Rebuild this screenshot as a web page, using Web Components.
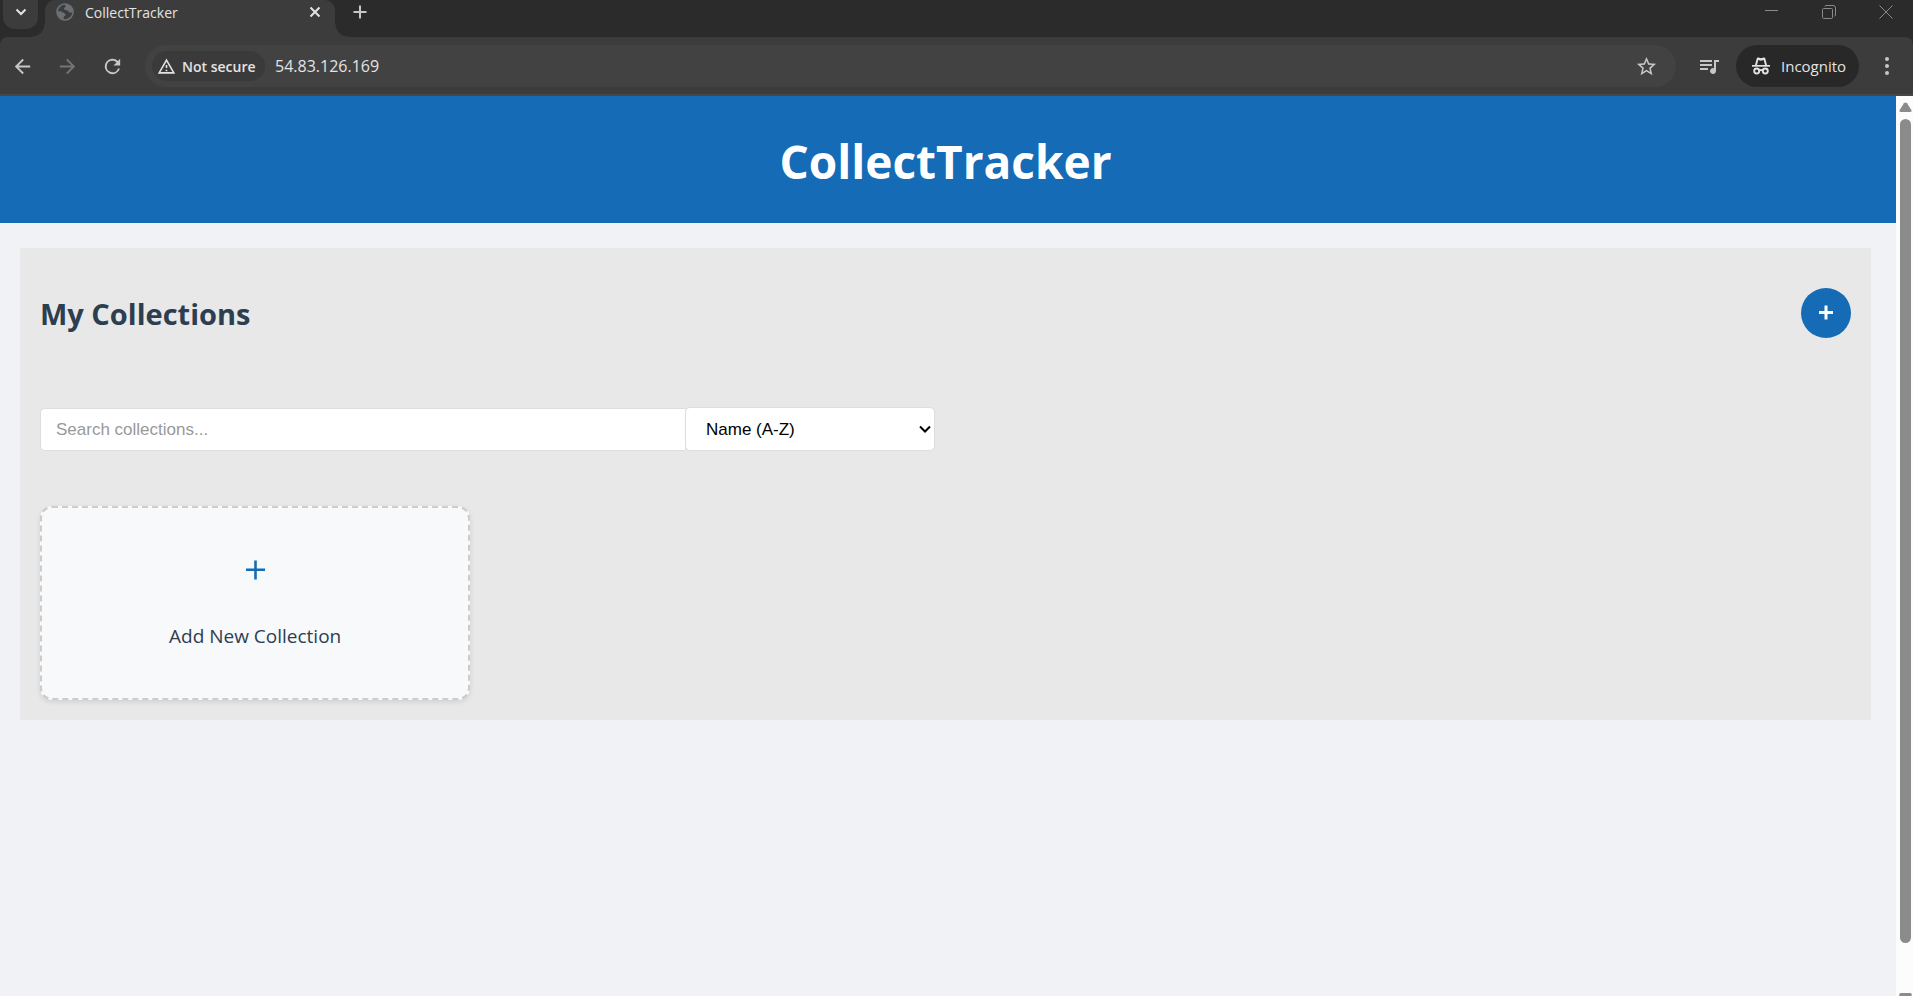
<!DOCTYPE html>
<html lang="en">
<head>
<meta charset="utf-8">
<title>CollectTracker</title>
<style>
  body { margin: 0; font-family: "Open Sans", "Noto Sans", sans-serif; background: #f0f2f5; }
</style>
</head>
<body>
<browser-window>
  <tab-strip slot="tabs">CollectTracker</tab-strip>
  <tool-bar slot="toolbar" address="54.83.126.169"></tool-bar>
  <site-header>CollectTracker</site-header>
  <collections-panel>
    <span slot="title">My Collections</span>
    <search-bar slot="search"></search-bar>
    <add-card>Add New Collection</add-card>
  </collections-panel>
  <scroll-bar slot="scroll"></scroll-bar>
</browser-window>

<script>
function define(name, html) {
  const template = document.createElement('template');
  template.innerHTML = html;
  customElements.define(name, class extends HTMLElement {
    constructor() {
      super();
      this.attachShadow({ mode: 'open' }).append(template.content.cloneNode(true));
    }
    connectedCallback() {
      const url = this.shadowRoot.querySelector('[data-address]');
      if (url) url.value = this.getAttribute('address') || '';
    }
  });
}

define('browser-window', `
<style>
  :host { display: flex; flex-direction: column; height: 100vh; overflow: hidden; background: #2b2b2b; }
  .view { flex: 1; min-height: 0; display: flex; }
  .page { flex: 1; min-width: 0; overflow: hidden; background: #f0f2f5; }
</style>
<slot name="tabs"></slot>
<slot name="toolbar"></slot>
<div class="view"><main class="page"><slot></slot></main><slot name="scroll"></slot></div>`);

define('tab-strip', `
<style>
  :host { display: flex; height: 37px; background: #2b2b2b; color: #e3e3e3; font-size: 14px; }
  button { border: 0; padding: 0; margin: 0; background: none; color: inherit; display: grid; place-items: center; }
  svg { display: block; }
  .search { width: 35px; height: 29px; margin: 0 7px 0 3px; padding-bottom: 5px; box-sizing: border-box; background: #3c3c3c; border-radius: 0 0 12px 12px; }
  .tab { position: relative; display: flex; align-items: center; gap: 10px; box-sizing: border-box; width: 290px; height: 37px; padding: 0 14px 13px 10px; background: #3c3c3c; border-radius: 10px 10px 0 0; }
  .tab::before, .tab::after { content: ""; position: absolute; bottom: 0; width: 13px; height: 13px; }
  .tab::before { right: 100%; background: radial-gradient(circle at 0 0, transparent 12px, #3c3c3c 13px); }
  .tab::after { left: 100%; background: radial-gradient(circle at 100% 0, transparent 12px, #3c3c3c 13px); }
  .name { flex: 1; }
  .new { width: 50px; height: 24px; }
  .controls { margin-left: auto; display: flex; gap: 3px; color: #8a8a8a; }
  .controls button { width: 54px; height: 24px; }
</style>
<button class="search" aria-label="Search tabs"><svg width="12" height="8" viewBox="0 0 12 8" fill="none" stroke="currentColor" stroke-width="2"><path d="M1.5 1.5 6 6l4.500-4.500"/></svg></button>
<div class="tab">
  <svg width="20" height="20" viewBox="0 0 20 20"><circle cx="10" cy="10" r="8" fill="none" stroke="#6b7075" stroke-width="1.600"/><path fill="#6b7075" d="M2 9.500c3-.5 4.500-.2 6 1 1.300.8 2.800 1 2.500 2.500-.3 1.200-1.500 1-1.800 2.200l-.2 2.800C5 17.500 2 14 2 9.500zM10 2c4 0 7.500 3 8 7-.8 1.500-2.200 2-3.500 1.500-1-.4-1-1.800-2.300-2-1.500-.2-3-.3-3.200-1.700-.1-1.200 1.500-1.300 1.500-2.300z"/></svg>
  <span class="name"><slot></slot></span>
  <button aria-label="Close tab"><svg width="12" height="12" viewBox="0 0 12 12" stroke="currentColor" stroke-width="2"><path d="m1.500 1.500 9 9m0-9-9 9"/></svg></button>
</div>
<button class="new" aria-label="New tab"><svg width="14" height="14" viewBox="0 0 14 14" stroke="#c7c7c7" stroke-width="2"><path d="M7 .5v13M.5 7h13"/></svg></button>
<div class="controls">
  <button aria-label="Minimize"><svg width="14" height="14" viewBox="0 0 14 14" stroke="currentColor"><path d="M0 5.500h13"/></svg></button>
  <button aria-label="Restore"><svg width="14" height="14" viewBox="0 0 14 14" fill="none" stroke="currentColor"><rect x=".5" y="3.500" width="10" height="10" rx="1"/><path d="M3 1.500q0-1 1-1h7q2.500 0 2.500 2.500v7q0 1-1 1"/></svg></button>
  <button aria-label="Close"><svg width="14" height="14" viewBox="0 0 14 14" stroke="currentColor"><path d="m.5.5 13 13m0-13-13 13"/></svg></button>
</div>`);

define('tool-bar', `
<style>
  :host { display: flex; align-items: center; box-sizing: border-box; height: 59px; padding: 1px 9px 0 10px; background: #3c3c3c; border-bottom: 2px solid #474747; border-radius: 8px 8px 0 0; color: #c7c7c7; }
  button { border: 0; padding: 0; margin: 0; background: none; color: inherit; font: inherit; display: grid; place-items: center; }
  svg { display: block; fill: currentColor; }
  .nav { width: 24px; height: 24px; margin-right: 21px; }
  .off { color: #757575; }
  .box { flex: 1; min-width: 0; display: flex; align-items: center; box-sizing: border-box; height: 42px; padding: 0 18px 0 7px; border-radius: 21px; background: #424242; color: #e3e3e3; }
  .chip { display: flex; align-items: center; gap: 6px; height: 30px; width: 113px; padding-left: 5px; box-sizing: border-box; border-radius: 15px; background: #3a3a3a; font-size: 14px; font-weight: 600; }
  input { flex: 1; min-width: 0; margin: 0 10px; padding: 0; border: 0; background: none; color: inherit; font: 16px "Open Sans", "Noto Sans", sans-serif; outline: 0; }
  .queue { margin: 0 15px 0 21px; }
  .who { display: flex; align-items: center; gap: 10px; width: 123px; height: 42px; padding-left: 15px; box-sizing: border-box; border-radius: 21px; background: #282828; color: #e3e3e3; font-size: 15px; }
  .more { width: 10px; margin: 0 12px 0 23px; }
</style>
<button class="nav" aria-label="Back"><svg width="23" height="23" viewBox="0 0 24 24"><path d="M20 11H7.830l5.590-5.590L12 4l-8 8 8 8 1.410-1.410L7.830 13H20z"/></svg></button>
<button class="nav off" aria-label="Forward"><svg width="23" height="23" viewBox="0 0 24 24"><path d="m12 4-1.410 1.410L16.170 11H4v2h12.170l-5.580 5.590L12 20l8-8z"/></svg></button>
<button class="nav" aria-label="Reload"><svg width="23" height="23" viewBox="0 0 24 24"><path d="M17.650 6.350A8 8 0 1 0 19.730 14h-2.080A6 6 0 1 1 12 6c1.660 0 3.140.69 4.220 1.780L13 11h7V4z"/></svg></button>
<div class="box">
  <button class="chip"><svg width="19" height="19" viewBox="0 0 24 24"><path d="M12 5.990 19.530 19H4.470L12 5.990M12 2 1 21h22L12 2zm1 14h-2v2h2v-2zm0-6h-2v4h2v-4z"/></svg>Not secure</button>
  <input data-address aria-label="Address" spellcheck="false">
  <button aria-label="Bookmark"><svg width="23" height="23" viewBox="0 0 24 24" style="color:#c7c7c7"><path d="m22 9.240-7.190-.62L12 2 9.190 8.630 2 9.240l5.460 4.730L5.820 21 12 17.270 18.180 21l-1.630-7.030L22 9.240zM12 15.400l-3.760 2.270 1-4.280-3.320-2.880 4.380-.38L12 6.100l1.710 4.040 4.380.38-3.320 2.880 1 4.280L12 15.400z"/></svg></button>
</div>
<button class="queue" aria-label="Media controls"><svg width="24" height="24" viewBox="0 0 24 24"><path d="M15 6H3v2h12V6zm0 4H3v2h12v-2zM3 16h8v-2H3v2zM17 6v8.180A3 3 0 1 0 19 17V8h3V6z"/></svg></button>
<button class="who"><svg width="20" height="20" viewBox="0 0 20 20"><path d="M1 9h18v1.700H1z"/><path d="m4 9 1.700-6.500Q6.200 1 7.500 1.500L10 2.300l2.500-.8q1.300-.5 1.800 1L16 9h-2l-1.300-5L10 4.800 7.300 4 6 9z"/><g fill="none" stroke="currentColor" stroke-width="1.900"><circle cx="5.700" cy="15" r="2.500"/><circle cx="14.300" cy="15" r="2.500"/><path d="M8 14.500q2-1 4 0"/></g></svg>Incognito</button>
<button class="more" aria-label="Menu"><svg width="4" height="18" viewBox="0 0 4 18"><circle cx="2" cy="2" r="2"/><circle cx="2" cy="9" r="2"/><circle cx="2" cy="16" r="2"/></svg></button>`);

define('site-header', `
<style>
  :host { display: block; padding: 32px 25px 28px 20px; background: #156bb5; color: #fff; text-align: center; }
  h1 { margin: 0; font-size: 46px; line-height: 67px; font-weight: 700; }
</style>
<h1><slot></slot></h1>`);

define('collections-panel', `
<style>
  :host { display: block; margin: 25px 25px 0 20px; padding: 40px 20px 20px; background: #e8e8e8; }
  .head { display: flex; justify-content: space-between; align-items: center; margin-bottom: 69px; }
  h2 { margin: 0; padding-top: 2px; font-size: 29px; line-height: 40px; color: #2c3e50; }
  button { width: 50px; height: 50px; padding: 0; border: 0; border-radius: 50%; background: #156bb5; display: grid; place-items: center; }
  .grid { display: grid; grid-template-columns: repeat(4, 1fr); gap: 30px; margin-top: 55px; }
</style>
<div class="head"><h2><slot name="title"></slot></h2>
<button aria-label="Add collection"><svg width="16" height="16" viewBox="0 0 16 16" stroke="#fff" stroke-width="3"><path d="M8 .5v14M1 7.500h14"/></svg></button></div>
<slot name="search"></slot>
<div class="grid"><slot></slot></div>`);

define('search-bar', `
<style>
  :host { display: flex; align-items: end; max-width: 895px; }
  input, select { box-sizing: border-box; border: 1px solid #ddd; background: #fff; font: 17px "Liberation Sans", Arial, sans-serif; }
  input { flex: 1; min-width: 0; height: 43px; padding: 0 15px; border-right: 0; border-radius: 5px 0 0 5px; outline: 0; }
  input::placeholder { color: #999; opacity: 1; }
  .pick { display: grid; width: 250px; }
  select { grid-area: 1 / 1; appearance: none; height: 44px; padding: 0 20px; border-radius: 5px; color: #000; }
  svg { grid-area: 1 / 1; place-self: center end; margin-right: 4px; pointer-events: none; }
</style>
<input type="search" placeholder="Search collections..." aria-label="Search collections">
<div class="pick"><select aria-label="Sort order"><option>Name (A-Z)</option></select>
<svg width="12" height="8" viewBox="0 0 12 8" fill="none" stroke="#000" stroke-width="2"><path d="m1 1.500 5 5 5-5"/></svg></div>`);

define('add-card', `
<style>
  :host { display: grid; }
  button { display: flex; flex-direction: column; align-items: center; box-sizing: border-box; height: 194px; padding: 52px 20px 0; border: 2px dashed #ccc; border-radius: 12px; background: #f8f9fb; box-shadow: 0 2px 5px rgba(0, 0, 0, .1); color: #2c3e50; font: 19px/28px "Open Sans", "Noto Sans", sans-serif; }
  svg { margin-bottom: 42px; }
</style>
<button><svg width="20" height="20" viewBox="0 0 20 20" stroke="#156bb5" stroke-width="2.600"><path d="M10.500 .5v19M1 9.700h19"/></svg><slot></slot></button>`);

define('scroll-bar', `
<style>
  :host { display: flex; flex-direction: column; align-items: center; box-sizing: border-box; width: 17px; padding: 6px 0 0 2px; background: #fcfcfc; }
  .thumb { flex: 1; width: 11px; margin: 7px 0 50px; border-radius: 6px; background: #8b8b8b; }
  svg { display: block; fill: #8b8b8b; }
</style>
<svg width="13" height="10" viewBox="0 0 13 10"><path d="M1.500 10h10q1.500-.5 1-1.800L8 1.300q-1.500-1.800-3 0L.5 8.200q-.5 1.300 1 1.800z"/></svg>
<div class="thumb"></div>
<svg width="13" height="3" viewBox="0 0 13 3"><path d="M1.500 0h10q2 .8 1 2.500V3H.5Q-.5.800 1.500 0z"/></svg>`);
</script>
</body>
</html>
